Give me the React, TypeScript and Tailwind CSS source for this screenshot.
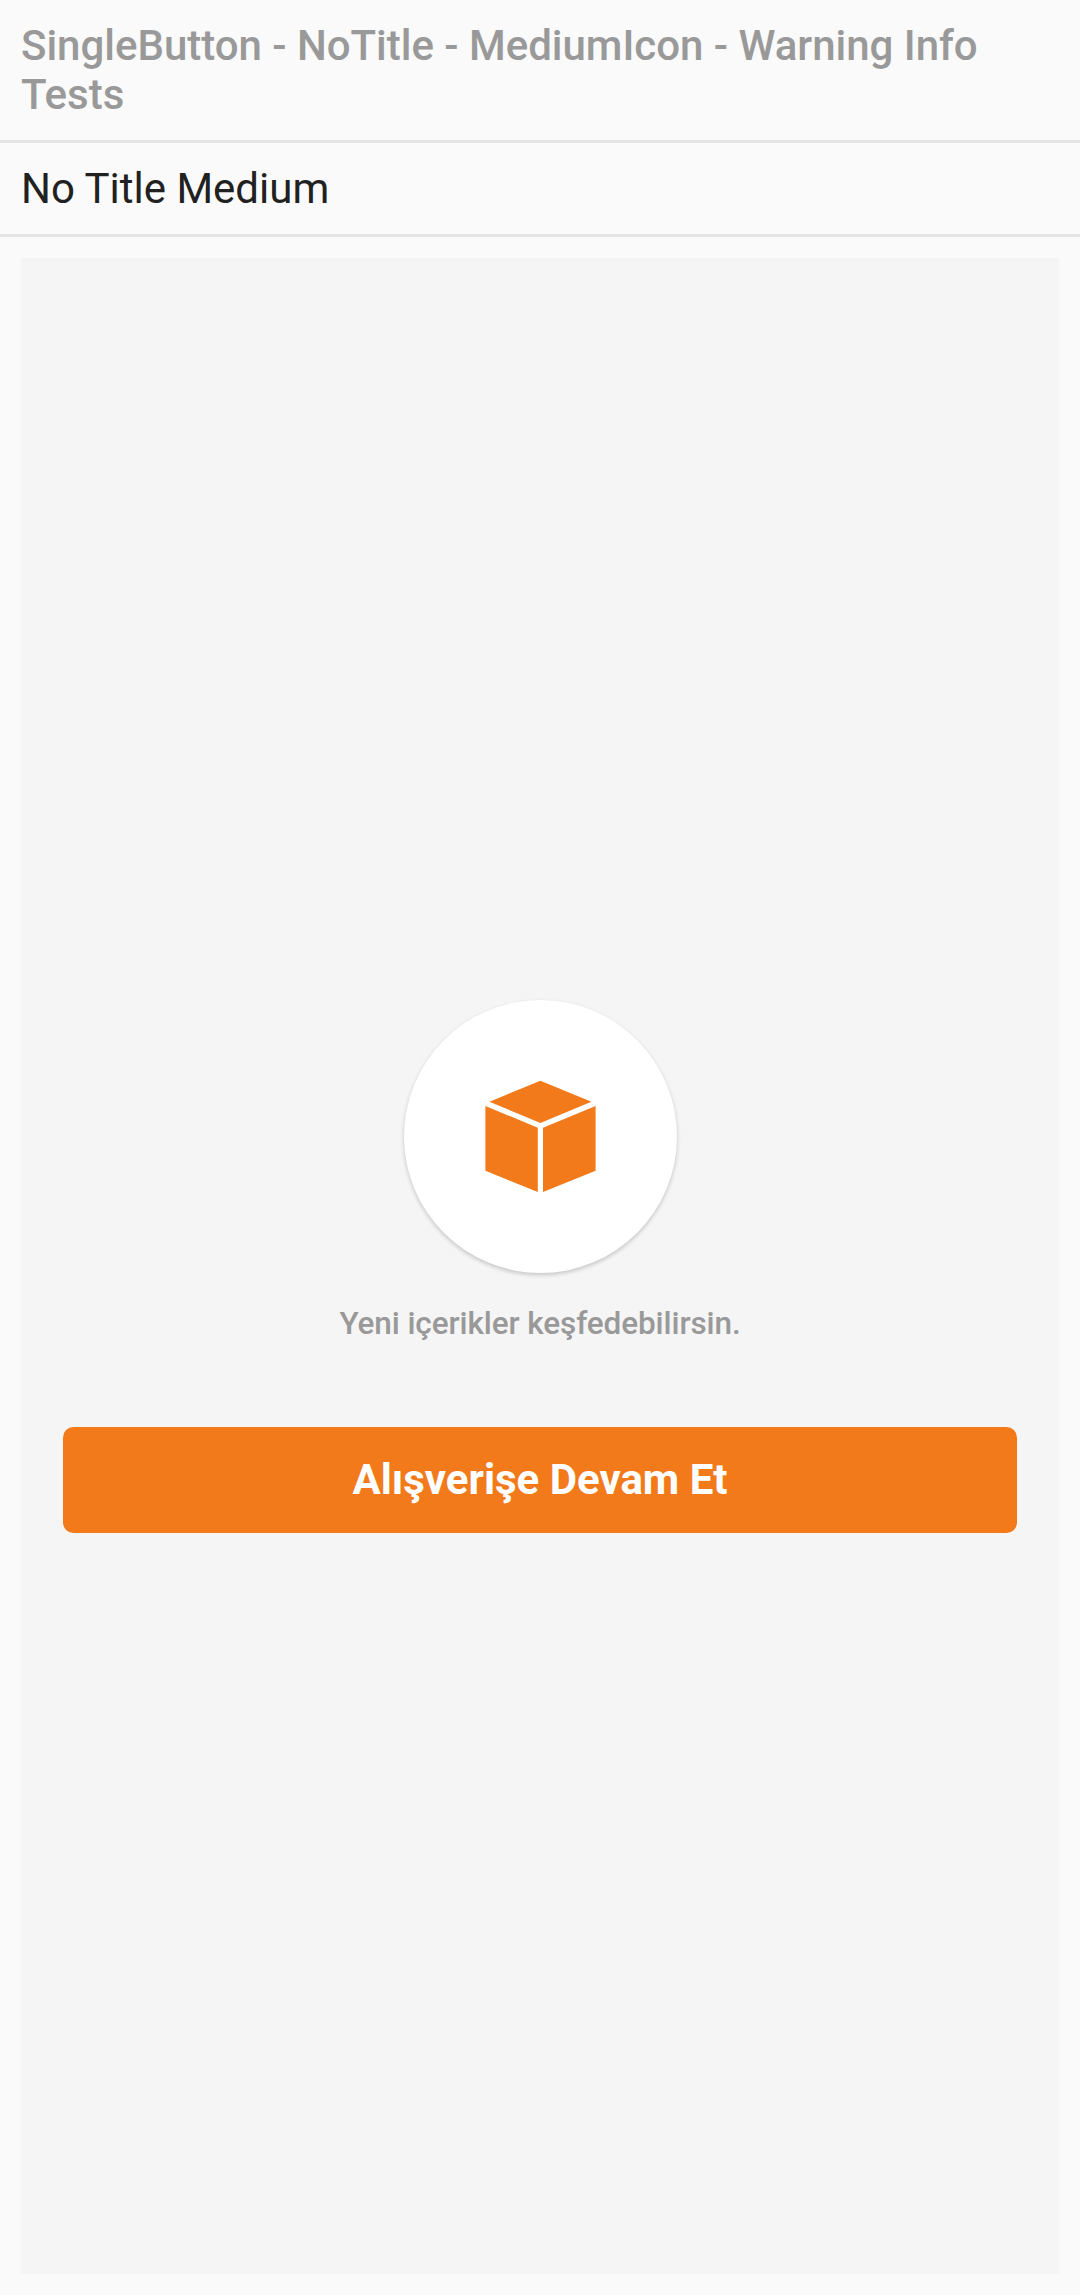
export default function App() {
  return (
    <main className="flex h-[2295px] w-[1080px] flex-col bg-[#fafafa] font-['Roboto',sans-serif]">
      <header className="h-[143px] border-b-3 border-[#e4e4e4] px-[21px] pt-[21px]">
        <h1 className="text-[42px] leading-[49px] font-medium tracking-[-0.02px] text-[#999999]">
          SingleButton - NoTitle - MediumIcon - Warning Info<br />Tests
        </h1>
      </header>
      <h2 className="h-[94px] border-b-3 border-[#e4e4e4] px-[21px] pt-[21px] text-[42px] leading-[49px] text-[#212121]">No Title Medium</h2>
      <section className="mx-[21px] mt-[21px] flex h-[2016px] flex-col items-center bg-[#f5f5f5] px-[42px] pt-[742px]">
        <div className="ml-px flex size-[273px] items-center justify-center rounded-full bg-white shadow-[0_2px_4px_rgba(0,0,0,0.2)]">
          <svg className="size-[112px]" viewBox="0.5 0.5 112 112" fill="#f27a1a" aria-hidden="true" overflow="visible">
            <path d="M55.9.2 106.9 21.2 55.9 42.5 4.9 21.2ZM.9 25.5 53.3 47.2V111.6L.9 90.2ZM111.1 25.5 58.5 47.2V111.6L111.1 90.2Z" />
          </svg>
        </div>
        <p className="mt-8 text-[31.5px] leading-[38px] font-medium tracking-[-0.1px] text-[#999999]">Yeni içerikler keşfedebilirsin.</p>
        <button className="mt-[84px] h-[106px] w-full rounded-[10.5px] bg-[#f27a1a] pb-px text-[42px] leading-[49px] font-bold text-white">Alışverişe Devam Et</button>
      </section>
    </main>
  );
}
